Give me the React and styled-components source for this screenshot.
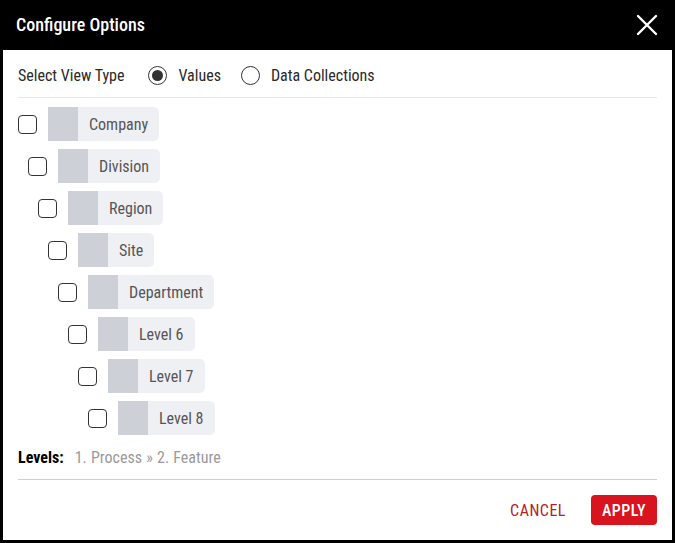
import React from 'react';
import styled, { createGlobalStyle } from 'styled-components';

const Global = createGlobalStyle`
  html, body { margin: 0; }
  body { font-family: "Roboto Condensed", Roboto, sans-serif; color: #333; }
`;

const levels = ['Company', 'Division', 'Region', 'Site', 'Department', 'Level 6', 'Level 7', 'Level 8'];

const Dialog = styled.div`
  width: 675px;
  height: 543px;
  box-sizing: border-box;
  border: 3px solid #000;
  background: #fff;
  display: flex;
  flex-direction: column;
`;

const Header = styled.div`
  height: 47px;
  background: #000;
  color: #fff;
  display: flex;
  align-items: center;
  justify-content: space-between;
  padding: 0 14px 0 13px;
  h1 {
    margin: 0;
    font-size: 18px;
    font-weight: 500;
    padding-bottom: 4px;
  }
`;

const CloseBtn = styled.button`
  background: none;
  border: 0;
  padding: 0 0 3px;
  display: flex;
  cursor: pointer;
`;

const Body = styled.div`
  flex: 1;
  padding: 0 15px;
  display: flex;
  flex-direction: column;
`;

const ViewType = styled.div`
  height: 44px;
  padding-top: 3px;
  display: flex;
  align-items: center;
  border-bottom: 1px solid #e6e6e6;
  font-size: 16px;
  color: #2a2a2a;
  span.label { margin-right: 24px; }
`;

const RadioOpt = styled.label`
  display: flex;
  align-items: center;
  gap: 11px;
  margin-right: 20px;
`;

const RadioCircle = styled.span`
  width: 19px;
  height: 19px;
  box-sizing: border-box;
  border: 1.5px solid #333;
  border-radius: 50%;
  display: flex;
  align-items: center;
  justify-content: center;
  &::after {
    content: '';
    width: 11px;
    height: 11px;
    border-radius: 50%;
    background: #333;
    display: ${(p) => (p.$checked ? 'block' : 'none')};
  }
`;

const Tree = styled.div`
  display: flex;
  flex-direction: column;
  gap: 8px;
  padding-top: 9px;
`;

const Row = styled.div`
  display: flex;
  align-items: center;
  gap: 11px;
  padding-left: ${(p) => p.$level * 10}px;
`;

const Check = styled.span`
  width: 19px;
  height: 19px;
  box-sizing: border-box;
  border: 1.5px solid #333;
  border-radius: 4px;
`;

const Chip = styled.div`
  height: 34px;
  display: flex;
  align-items: center;
  background: #eff0f3;
  border-radius: 0 5px 5px 0;
  font-size: 16px;
  color: #555;
  padding-right: 11px;
  &::before {
    content: '';
    width: 30px;
    align-self: stretch;
    background: #cdd0d6;
    margin-right: 11px;
  }
`;

const Levels = styled.div`
  margin-top: 11px;
  height: 22px;
  display: flex;
  align-items: center;
  gap: 11px;
  font-size: 16px;
  padding-bottom: 11px;
  border-bottom: 1px solid #cfcfcf;
  b { color: #000; font-weight: 700; }
  span { color: #9a9a9a; word-spacing: 0.5px; }
`;

const Footer = styled.div`
  display: flex;
  justify-content: flex-end;
  align-items: center;
  gap: 25px;
  padding-top: 15px;
`;

const Button = styled.button`
  font-family: inherit;
  font-size: 16px;
  text-transform: uppercase;
  letter-spacing: 0.5px;
  border: 0;
  border-radius: 4px;
  height: 30px;
  padding: 0 ${(p) => (p.$primary ? '11px' : '0')};
  background: ${(p) => (p.$primary ? '#d8141f' : 'transparent')};
  color: ${(p) => (p.$primary ? '#fff' : '#b5202a')};
  font-weight: ${(p) => (p.$primary ? 500 : 400)};
  cursor: pointer;
`;

export default function App() {
  return (
    <Dialog>
      <Global />
      <Header>
        <h1>Configure Options</h1>
        <CloseBtn aria-label="close">
          <svg width="22" height="22" viewBox="0 0 22 22">
            <path d="M2 2 L20 20 M20 2 L2 20" stroke="#fff" strokeWidth="2.4" strokeLinecap="round" />
          </svg>
        </CloseBtn>
      </Header>
      <Body>
        <ViewType>
          <span className="label">Select View Type</span>
          <RadioOpt>
            <RadioCircle $checked />
            Values
          </RadioOpt>
          <RadioOpt>
            <RadioCircle />
            Data Collections
          </RadioOpt>
        </ViewType>
        <Tree>
          {levels.map((l, i) => (
            <Row key={l} $level={i}>
              <Check />
              <Chip>{l}</Chip>
            </Row>
          ))}
        </Tree>
        <Levels>
          <b>Levels:</b>
          <span>1. Process » 2. Feature</span>
        </Levels>
        <Footer>
          <Button>Cancel</Button>
          <Button $primary>Apply</Button>
        </Footer>
      </Body>
    </Dialog>
  );
}
